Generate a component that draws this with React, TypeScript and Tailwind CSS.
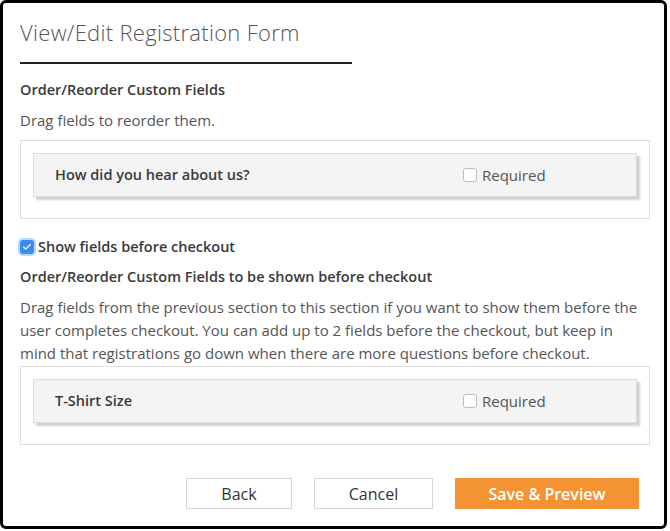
import { Check } from "lucide-react";

const FONT = "font-['Open_Sans','Liberation_Sans',sans-serif]";

interface FieldCardProps {
  label: string;
}

function FieldCard({ label }: FieldCardProps) {
  return (
    <div className="border border-[#dedede] px-[12px] pb-[21px] pt-[12px]">
      <div className="flex h-[44px] items-center border border-[#dcdcdc] bg-[#f4f4f4] pl-[21px] shadow-[3px_3px_2px_rgba(0,0,0,0.18)]">
        <span className="w-[408px] text-[14.5px] font-semibold text-[#3a3a3a]">{label}</span>
        <span className="flex items-center gap-[5px] text-[15px] text-[#555]">
          <span className="h-[14px] w-[14px] rounded-[3px] border border-[#bdbdbd] bg-white" />
          Required
        </span>
      </div>
    </div>
  );
}

export default function App() {
  return (
    <div className={`h-[531px] w-[670px] bg-white ${FONT}`}>
      <div className="h-[529px] w-[667px] rounded-[6px] border-[3px] border-black px-[17px] pt-[14px]">
        <h1 className="text-[22px] font-light leading-[30px] tracking-[0.3px] text-[#555]">
          View/Edit Registration Form
        </h1>
        <div className="mt-[15px] h-[2px] w-[332px] bg-[#222]" />

        <h2 className="mt-[15px] text-[14.5px] font-semibold leading-[22px] text-[#3a3a3a]">
          Order/Reorder Custom Fields
        </h2>
        <p className="mt-[8px] text-[15px] leading-[22px] text-[#555]">
          Drag fields to reorder them.
        </p>

        <div className="mt-[9px] w-[630px]">
          <FieldCard label="How did you hear about us?" />
        </div>

        <label className="mt-[17px] flex items-center gap-[4px] text-[14.5px] font-semibold leading-[22px] text-[#3a3a3a]">
          <span className="flex h-[14px] w-[14px] items-center justify-center rounded-[3px] bg-[#3b8cf2] shadow-[0_0_0_2px_rgba(59,140,242,0.35)]">
            <Check className="h-[10px] w-[10px] text-white" strokeWidth={3} />
          </span>
          Show fields before checkout
        </label>

        <h2 className="mt-[8px] text-[14.5px] font-semibold leading-[22px] text-[#3a3a3a]">
          Order/Reorder Custom Fields to be shown before checkout
        </h2>
        <p className="mt-[8px] w-[625px] text-[15px] leading-[23px] text-[#555]">
          Drag fields from the previous section to this section if you want to show them before the
          user completes checkout. You can add up to 2 fields before the checkout, but keep in
          mind that registrations go down when there are more questions before checkout.
        </p>

        <div className="mt-[1px] w-[630px]">
          <FieldCard label="T-Shirt Size" />
        </div>

        <div className="mt-[33px] flex w-[619px] justify-end gap-[22px]">
          <button className="h-[31px] w-[106px] border border-[#d6d6d6] bg-white text-[16px] text-[#333]">
            Back
          </button>
          <button className="h-[31px] w-[119px] border border-[#d6d6d6] bg-white text-[16px] text-[#333]">
            Cancel
          </button>
          <button className="h-[31px] w-[184px] bg-[#f39333] text-[16px] font-semibold text-white">
            Save &amp; Preview
          </button>
        </div>
      </div>
    </div>
  );
}
